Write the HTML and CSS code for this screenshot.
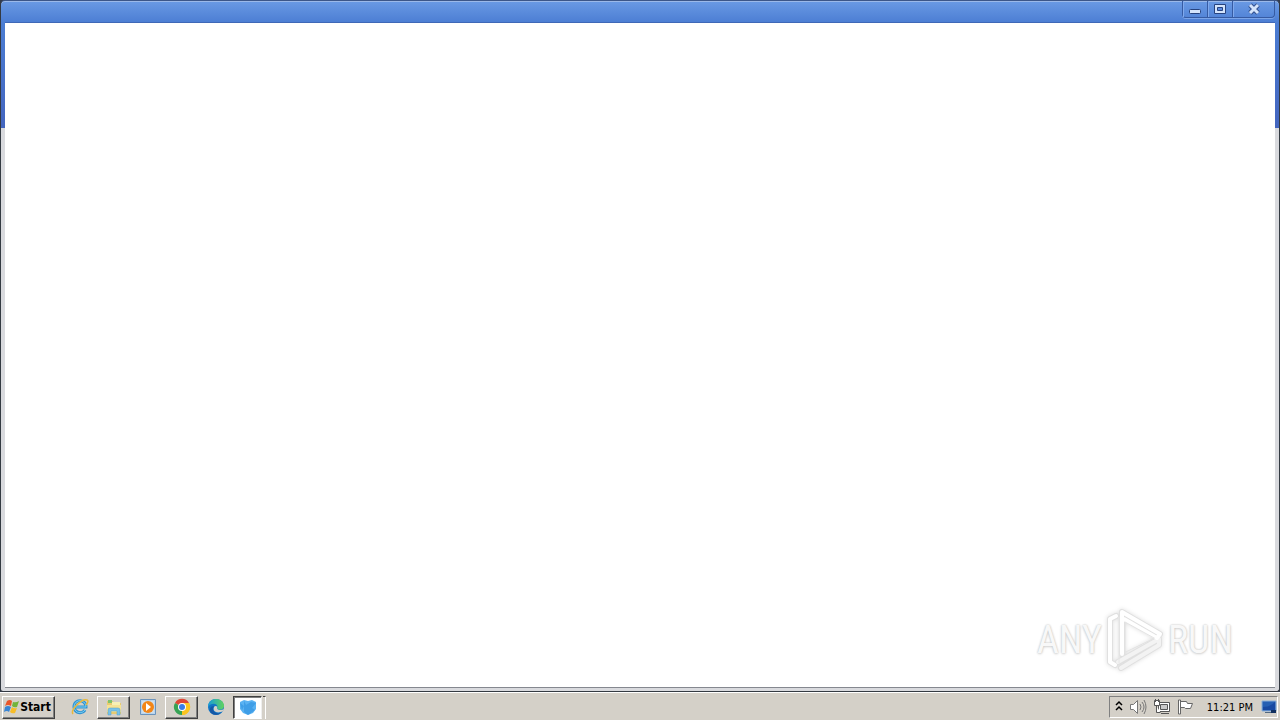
FILE: index.html
```html
<!DOCTYPE html>
<html lang="en">
<head>
<meta charset="utf-8">
<title>Desktop</title>
<link rel="stylesheet" href="styles.css">
</head>
<body>
<main class="window">
  <header class="titlebar">
    <div class="controls">
      <button class="control" aria-label="Minimize"><svg width="14" height="12" viewBox="0 0 14 12"><rect x="1.500" y="6.500" width="11" height="4" rx="1" fill="#d4e4fb" stroke="#27437f"/></svg></button>
      <button class="control" aria-label="Maximize"><svg width="14" height="12" viewBox="0 0 14 12"><path d="M1.500 1.500h11v9h-11z" fill="#d4e4fb" stroke="#27437f"/><path d="M4.500 4.500h5v3h-5z" fill="#5b8ae0" stroke="#27437f"/></svg></button>
      <button class="control close" aria-label="Close"><svg width="14" height="12" viewBox="0 0 14 12"><path d="M3 2l8 8M11 2l-8 8" stroke="#34528f" stroke-width="5"/><path d="M3 2l8 8M11 2l-8 8" stroke="#d4e4fb" stroke-width="3"/></svg></button>
    </div>
  </header>
  <section class="client">
    <div class="watermark">
      <span>ANY</span>
      <svg width="58" height="64" viewBox="0 0 58 64" fill="none" stroke-linejoin="round" stroke-linecap="round">
        <path d="M16 46V4l38 22-3 4M10 8l-6 3v43l5 3M15 60l38-23v-6L12 54" stroke="#e0e0e0" stroke-width="6"/>
        <path d="M15 60l38-23v-6L12 54" stroke="#f3f3f3" stroke-width="4"/>
        <path d="M9 57l-5-3V11l6-3M16 46V4l38 22-3 4-33-19" stroke="#fff" stroke-width="4"/>
        <path d="M19 44V14l29 16z" stroke="#e3e3e3"/>
        <path d="M13 55V9" stroke="#e6e6e6"/>
      </svg>
      <span>RUN</span>
    </div>
  </section>
</main>
<footer class="taskbar">
  <button class="task start"><svg width="16" height="16" viewBox="0 0 16 16"><path d="M3 2Q6 0 8 2L7 7Q4 5 1 7z" fill="#e9562b"/><path d="M9 3Q12 4 15 2L13 8Q10 9 8 7z" fill="#72b43c"/><path d="M1 8Q4 6 7 8L5 13Q3 11 0 13z" fill="#3985d4"/><path d="M8 8Q10 10 13 9L11 14Q8 15 6 13z" fill="#f7bd28"/></svg>Start</button>
  <nav class="tasks">
    <button class="task flat" aria-label="Internet Explorer"><svg width="18" height="18" viewBox="0 0 18 18" fill="none"><path d="M14 12A6 6 0 1 1 15 9H5" stroke="#2f93d2" stroke-width="3"/><path d="M14 12A6 6 0 1 1 15 9H5" stroke="#7bcff2" stroke-width="1"/><path d="M2 16C-1 12 11 0 16 2c2 1 0 4-1 5" stroke="#e9b83c" stroke-width="1.500"/></svg></button>
    <button class="task" aria-label="Windows Explorer"><svg width="18" height="18" viewBox="0 0 18 18"><path d="M2 3h6l1 2h7v11H2z" fill="#e8cb70"/><path d="M3 2h4v3H3z" fill="#7fc36c"/><path d="M7 4h8v5H7z" fill="#f6f0b5"/><path d="M2 7h14v7H2z" fill="#f6e394"/><path d="M3 17v-5q0-2 2-2h8q2 0 2 2v5h-3v-4H6v4z" fill="#78c2e8" stroke="#539fc9" stroke-width=".5"/></svg></button>
    <button class="task flat" aria-label="Media Player"><svg width="18" height="18" viewBox="0 0 18 18"><path d="M1.500 1.500h15v15h-15z" fill="#b9d5ee" stroke="#6b93bb"/><path d="M3 3h12v12H3z" fill="#cfdfec"/><circle cx="9" cy="9" r="6" fill="#f28618"/><path d="M7 5l5 4-5 4z" fill="#fff"/></svg></button>
    <button class="task" aria-label="Chrome"><svg width="18" height="18" viewBox="0 0 18 18"><path d="M9 9L2 5a8 8 0 0 1 14 0z" fill="#df4635"/><path d="M9 9l7-4A8 8 0 0 1 9 17z" fill="#fbc520"/><path d="M9 9v8A8 8 0 0 1 2 5z" fill="#37a354"/><path d="M9 5h7a8 8 0 0 1-7 12l4-7z" fill="#fbc520"/><circle cx="9" cy="9" r="4" fill="#fff"/><circle cx="9" cy="9" r="3" fill="#397de8"/></svg></button>
    <button class="task flat" aria-label="Edge"><svg width="18" height="18" viewBox="0 0 18 18"><defs><linearGradient id="edge"><stop stop-color="#179bda"/><stop offset="1" stop-color="#61d45c"/></linearGradient></defs><circle cx="9" cy="9" r="8" fill="#1174c5"/><path d="M1 9C1-2 17-1 17 8c0 4-6 5-7 2 2-5-6-6-9-1" fill="url(#edge)"/><path d="M7 9c-2 5 4 7 9 4l1-2c-3 2-7 1-7-1 1-2-2-3-3-1" fill="#d4d0c8"/><path d="M7 8c-3 4 1 9 7 7-5 4-12 1-11-4 0-2 2-3 4-3" fill="#1557a5"/></svg></button>
    <button class="task active" aria-label="Current application"><svg width="18" height="18" viewBox="0 0 18 18"><path d="M1 4l4-2 4 1 4-1 4 2v7l-3 4-5 2-5-2-3-4z" fill="#5ab2f2"/><path d="M1 5l4 3-2 4zM5 3l2 4 5-3 5 1-4 5 3 2-7 5-4-3" fill="#2389dc" opacity=".5"/></svg></button>
    <span class="stack"></span>
  </nav>
  <div class="tray">
    <button class="icon" aria-label="Show hidden icons"><svg width="8" height="14" viewBox="0 0 8 14" fill="none" stroke="#000" stroke-width="1.500"><path d="M1 5l3-3 3 3M1 10l3-3 3 3"/></svg></button>
    <button class="icon" aria-label="Volume"><svg width="18" height="16" viewBox="0 0 18 16" fill="none" stroke="#777"><path d="M1.500 5.500h3l4-4v13l-4-4h-3z" fill="#fff"/><path d="M11 5q2 3 0 6M13 3q4 5 0 10M15 1q4 7 0 14"/></svg></button>
    <button class="icon" aria-label="Network"><svg width="18" height="16" viewBox="0 0 18 16" fill="none" stroke="#555"><path d="M5.500 3.500h11v9h-11z" fill="#fff"/><path d="M7.500 5.500h7v5h-7z" fill="#c8c8c8"/><path d="M8 14.500h8M3.500 7v6.500h4M1.500 1.500h5v5h-5zM2.500 0v3M5.500 0v3" fill="#fff"/></svg></button>
    <button class="icon" aria-label="Action Center"><svg width="18" height="16" viewBox="0 0 18 16" fill="#fff" stroke="#666"><path d="M1.500 1v14h2V1zM3.500 2.500h6l1 2h5l-2 5h-5l-1-1h-4z"/></svg></button>
    <time class="clock">11:21 PM</time>
    <button class="icon" aria-label="Show desktop"><svg width="16" height="14" viewBox="0 0 16 14"><path d="M1 1h14v10H1z" fill="#265fb3" stroke="#8aaed8"/><path d="M2 7q7 0 12-5v8H2z" fill="#1849a2"/><path d="M4 12h7v1H4z" fill="#536981"/><path d="M10 10h5v3h-5z" fill="#123060"/></svg></button>
  </div>
</footer>
</body>
</html>
```
FILE: styles.css
```css
* { box-sizing: border-box; }
body {
  margin: 0;
  min-height: 100vh;
  display: flex;
  flex-direction: column;
  background: #333c4b;
  font: 11px "DejaVu Sans Condensed", "DejaVu Sans", sans-serif;
}
button { margin: 0; padding: 0; border: 0; background: none; font: inherit; color: #000; }
svg { display: block; flex: none; }
.window {
  flex: 1;
  display: flex;
  flex-direction: column;
  padding: 0 4px 4px;
  border: 1px solid #343a42;
  border-top-color: #3c5688;
  border-radius: 5px 5px 3px 3px;
  background: linear-gradient(#6a9ae4, #4b7dd3 22px, #4365bf 127px, #d9dade 127px);
  box-shadow: inset 0 1px #9bb9e9;
}
.titlebar {
  height: 22px;
  display: flex;
  justify-content: flex-end;
  align-items: flex-start;
  border-bottom: 1px solid #3f68b7;
}
.controls {
  display: flex;
  height: 17px;
  border: 1px solid #365ba3;
  border-top: 0;
  border-radius: 0 0 4px 4px;
  box-shadow: 0 1px #7ca5e8;
}
.control {
  width: 25px;
  display: flex;
  justify-content: center;
  align-items: center;
  border-right: 1px solid #365ba3;
  box-shadow: inset 1px 0 #80a9ec;
}
.close { width: 41px; border-right: 0; }
.client {
  flex: 1;
  display: flex;
  justify-content: flex-end;
  align-items: flex-end;
  padding: 0 42px 15px;
  background: #fff;
  box-shadow: 0 1px #85888f;
}
.watermark {
  display: flex;
  align-items: center;
  gap: 4px;
  color: #f8f8f8;
  font: 38px "Liberation Sans Narrow", "Roboto Condensed", "Open Sans Condensed", "Liberation Sans", sans-serif;
  text-shadow: 0 0 2px #bbb, 0 1px 3px #ddd;
}
.watermark svg { filter: drop-shadow(0 0 2px #ddd); }
.taskbar {
  height: 28px;
  display: flex;
  align-items: center;
  padding: 2px 2px 1px;
  border-top: 1px solid #fff;
  background: #d4d0c8;
}
.task {
  width: 33px;
  height: 23px;
  display: flex;
  justify-content: center;
  align-items: center;
  border: 1px solid #404040;
  border-top-color: #fff;
  border-left-color: #fff;
  box-shadow: inset -1px -1px #808080;
}
.start { width: 53px; padding-right: 2px; font-weight: bold; font-size: 12px; }
.tasks { display: flex; gap: 1px; margin-left: 8px; }
.flat { border-color: transparent; box-shadow: none; }
.active {
  width: 29px;
  background: #fff;
  border-color: #404040 #eee #fff #404040;
  box-shadow: inset 1px 1px #808080;
}
.stack { width: 3px; border-top: 1px solid #404040; border-right: 1px solid #fff; }
.tray {
  display: flex;
  align-items: center;
  gap: 6px;
  height: 22px;
  margin-left: auto;
  padding-left: 5px;
  border: 1px solid #808080;
  border-right-color: #fff;
  border-bottom-color: #fff;
}
.clock { margin: 0 2px 0 6px; }
```
